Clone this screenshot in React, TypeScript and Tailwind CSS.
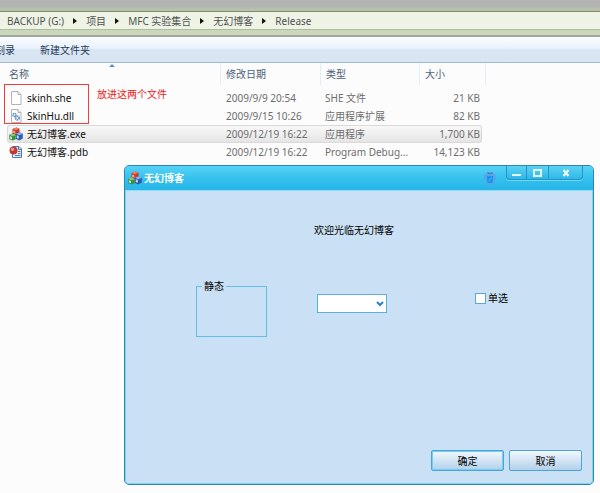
import { useState } from "react";

type FileKind = "blank" | "dll" | "exe" | "pdb";

interface FileRow {
  name: string;
  kind: FileKind;
  date: string;
  type: string;
  size: string;
}

const crumbs = ["BACKUP (G:)", "项目", "MFC 实验集合", "无幻博客", "Release"];

const files: FileRow[] = [
  { name: "skinh.she", kind: "blank", date: "2009/9/9 20:54", type: "SHE 文件", size: "21 KB" },
  { name: "SkinHu.dll", kind: "dll", date: "2009/9/15 10:26", type: "应用程序扩展", size: "82 KB" },
  { name: "无幻博客.exe", kind: "exe", date: "2009/12/19 16:22", type: "应用程序", size: "1,700 KB" },
  { name: "无幻博客.pdb", kind: "pdb", date: "2009/12/19 16:22", type: "Program Debug...", size: "14,123 KB" },
];

// three coloured cubes, the default MFC icon
function MfcIcon() {
  return (
    <svg width="14" height="14" viewBox="0 0 14 14" className="shrink-0" aria-hidden="true">
      <path d="M3.500 2 7.500 0.500 10.500 1.800v5L7 8.200 3.500 6.800z" fill="#c43a22" />
      <path d="M3.500 2 7.500 0.500 10.500 1.800 7 3.200z" fill="#ea8069" />
      <path d="M4.300 3.400 6.300 4.200v2.600L4.300 6z" fill="#f3b9a9" />
      <path d="M0.300 7.800 3.300 6.500 6.800 7.900v4.300L3.800 13.600 0.300 12.200z" fill="#3c9140" />
      <path d="M0.300 7.800 3.300 6.500 6.800 7.900 3.800 9.200z" fill="#8ecb80" />
      <path d="M1 9.200 3 10v2.300l-2-.8z" fill="#cdebc3" />
      <path d="M7 6.700 10.600 5.300 13.800 6.700v4.900L10.300 13.400 7 12z" fill="#2c5cb4" />
      <path d="M7 6.700 10.600 5.300 13.800 6.700 10.300 8.200z" fill="#8fb5ea" />
      <path d="M7.800 8.300 9.700 9.100v2.700L7.800 11z" fill="#cfe0f8" />
    </svg>
  );
}

function FileIcon({ kind }: { kind: FileKind }) {
  if (kind === "exe") return <MfcIcon />;

  if (kind === "pdb") {
    return (
      <svg width="14" height="14" viewBox="0 0 14 14" className="shrink-0" aria-hidden="true">
        <path d="M3.500 1.500h6.500l2.500 2.500v8.500h-9z" fill="#e4edfa" stroke="#5577ad" />
        <path d="M9.500 1.500v3h3" fill="none" stroke="#5577ad" />
        <path d="M9 6.500h2.500M9 8.500h2.500M6 10.500h5.500" stroke="#4a76c0" />
        <circle cx="4.500" cy="5.500" r="4" fill="#c03a35" />
        <circle cx="3.500" cy="4.300" r="1.800" fill="#e79088" />
      </svg>
    );
  }

  return (
    <svg width="14" height="14" viewBox="0 0 14 14" className="shrink-0" aria-hidden="true">
      <path d="M2.500 0.500h6.500l3 3v10h-9.500z" fill="#fdfdfd" stroke="#b2b2b2" />
      <path d="M9 0.500v3h3" fill="#ececec" stroke="#b2b2b2" />
      {kind === "dll" && (
        <g fill="none" stroke="#5c8fbd">
          <circle cx="5.500" cy="6" r="1.500" strokeWidth="1.500" strokeDasharray="1.200 .4" />
          <circle cx="8.300" cy="9" r="1.800" strokeWidth="1.700" strokeDasharray="1.300 .5" />
        </g>
      )}
    </svg>
  );
}

function AddressBar() {
  return (
    <nav className="border-y border-t-[#7f8a70] border-b-[#aebd9f] bg-[#eef3e6]">
      <ol className="flex h-[17px] items-center pl-[7px] text-[#4c5450]">
        {crumbs.map((crumb, i) => (
          <li key={crumb} className="flex items-center">
            {i > 0 && (
              <svg width="4" height="6" viewBox="0 0 4 6" className="mx-[9px]" aria-hidden="true">
                <path d="M0 0 4 3 0 6z" fill="#111" />
              </svg>
            )}
            <a href="#">{crumb}</a>
          </li>
        ))}
      </ol>
    </nav>
  );
}

function FileList() {
  const th = "h-[18px] border-l border-[#e3edf7] pl-[5px] text-left font-normal";

  return (
    <div className="relative ml-[7px]">
      <svg width="6" height="3" viewBox="0 0 6 3" className="absolute left-[102px] top-px" aria-hidden="true">
        <path d="M0 3 3 0 6 3z" fill="#5c93b5" />
      </svg>
      <table className="w-[479px] table-fixed border-separate border-spacing-0 whitespace-nowrap">
        <colgroup>
          <col className="w-[213px]" />
          <col className="w-[100px]" />
          <col className="w-[99px]" />
          <col className="w-[63px]" />
          <col className="w-1" />
        </colgroup>
        <thead className="text-[#4c607a]">
          <tr>
            <th className="h-[22px] pl-[2px] text-left font-normal">名称</th>
            <th className={th}>修改日期</th>
            <th className={th}>类型</th>
            <th colSpan={2} className={`${th} border-r`}>大小</th>
          </tr>
          <tr>
            <td colSpan={5} className="h-1" />
          </tr>
        </thead>
        <tbody className="text-[#6d6d6d]">
          {files.map((file) => {
            const on = file.kind === "exe";
            const cell = on
              ? "h-[18px] border-y border-[#d9d9d9] bg-linear-to-b from-[#f8f8f8] to-[#e5e5e5] p-0"
              : "h-[18px] p-0";
            return (
              <tr key={file.name}>
                <td className={`${cell} ${on ? "rounded-l-[3px] border-l" : ""}`}>
                  <div className={`flex items-center gap-1 text-[#111] ${on ? "pl-px" : "pl-0.5"}`}>
                    <FileIcon kind={file.kind} />
                    {file.name}
                  </div>
                </td>
                <td className={cell}>
                  <div className="pl-[6px]">{file.date}</div>
                </td>
                <td className={cell}>
                  <div className="pl-[5px]">{file.type}</div>
                </td>
                <td className={`${cell} text-right ${on ? "rounded-r-[3px] border-r" : ""}`}>
                  <div className={on ? "pr-px" : "pr-0.5"}>{file.size}</div>
                </td>
                <td />
              </tr>
            );
          })}
        </tbody>
      </table>

      {/* note around the two skin files */}
      <div className="pointer-events-none absolute -left-[3px] top-[21px] h-[40px] w-[85px] border border-[#f03c3c]" />
      <p className="absolute left-[90px] top-[24px] text-[#f01818]">放进这两个文件</p>
    </div>
  );
}

function TitleBar() {
  return (
    <header className="flex h-[25px] shrink-0 items-start rounded-t-[4px] border-b border-[#8fdcf5] bg-linear-to-b from-[#55d3f7] via-[#35c1ee] to-[#25b5e8] pl-[3px] pr-[10px] text-white">
      <div className="flex h-6 flex-1 items-center gap-0.5 font-bold">
        <MfcIcon />
        <h1>无幻博客</h1>
      </div>
      <button type="button" aria-label="换肤" className="mr-[9px] mt-[5px]">
        <svg width="14" height="14" viewBox="0 0 14 14">
          <path
            d="M5 1.500h4l3.500 3v4h-1.500l-.8 4.500h-6.400L3 8.500H1.500v-4z"
            fill="#4fa9ea"
            stroke="#65a0dc"
            strokeLinejoin="round"
          />
          <path d="M4 5h6v3l-.6 4H4.600L4 8z" fill="#1792f0" />
          <path d="M5 1v1.500h4V1" fill="none" stroke="#4a78b8" />
          <path d="M5.500 10.500 8.500 6.500" stroke="#4fb6fa" />
        </svg>
      </button>
      <div className="flex h-[14px] rounded-b-[4px] border border-t-0 border-[#2394c4] bg-linear-to-b from-[#5bd2f4] to-[#2cb7e8] shadow-[0_1px_0_#6fd8f8]">
        <button type="button" aria-label="最小化" className="flex w-5 items-center justify-center border-r border-[#2394c4]">
          <svg width="9" height="8" viewBox="0 0 9 8">
            <path d="M0 5h9v2H0z" fill="#dff5fc" />
          </svg>
        </button>
        <button type="button" aria-label="最大化" className="flex w-[22px] items-center justify-center border-r border-[#2394c4]">
          <svg width="9" height="8" viewBox="0 0 9 8">
            <path d="M1 1h7v6H1z" fill="none" stroke="#dff5fc" strokeWidth="2" />
          </svg>
        </button>
        <button type="button" aria-label="关闭" className="flex w-[33px] items-center justify-center">
          <svg width="8" height="8" viewBox="0 0 8 8">
            <path d="M1.500 1 6.500 7M6.500 1 1.500 7" stroke="#f2fcff" strokeWidth="2" />
          </svg>
        </button>
      </div>
    </header>
  );
}

function Dialog() {
  const [checked, setChecked] = useState(false);
  const button =
    "h-[21px] w-[73px] rounded-[2px] border border-[#4fa3d6] bg-linear-to-b from-[#f2f8fd] to-[#b3d0ea]";

  return (
    <section className="mx-[6px] mb-2 ml-[124px] mt-[4px] flex flex-1 flex-col rounded-[5px] border border-[#2f86b4] bg-[#cae0f4] text-black">
      <TitleBar />
      <form
        className="flex flex-1 flex-col rounded-b-[4px] border border-t-0 border-[#7fd3ee]"
        onSubmit={(e) => e.preventDefault()}
      >
        <p className="mt-8 pr-[10px] text-center">欢迎光临无幻博客</p>
        <div className="mt-[42px] flex items-start pl-[70px]">
          <fieldset className="h-[58px] w-[71px] border border-[#62bce4] pl-[5px]">
            <legend className="px-0.5">静态</legend>
          </fieldset>
          <div className="relative ml-[50px] mt-[15px]">
            <select
              aria-label="选项"
              defaultValue=""
              className="block h-[19px] w-[70px] appearance-none border border-[#62aedb] bg-white"
            >
              <option value="" />
            </select>
            <svg width="8" height="6" viewBox="0 0 8 6" className="pointer-events-none absolute right-[3px] top-[7px]" aria-hidden="true">
              <path d="M1 1 4 4 7 1" fill="none" stroke="#2b80cf" strokeWidth="2" />
            </svg>
          </div>
          <label className="ml-[88px] mt-3 flex items-center gap-0.5">
            <input
              type="checkbox"
              checked={checked}
              onChange={(e) => setChecked(e.target.checked)}
              className="size-[11px] appearance-none border border-solid border-[#5ba9da] bg-white checked:bg-[#2b80cf]"
            />
            单选
          </label>
        </div>
        <div className="mb-3 mr-[10px] mt-auto flex justify-end gap-[5px]">
          <button type="submit" className={`${button} ring-1 ring-inset ring-[#6fd0f7]`}>
            确定
          </button>
          <button type="button" className={button}>
            取消
          </button>
        </div>
      </form>
    </section>
  );
}

export default function App() {
  return (
    <div className="flex min-h-screen flex-col overflow-hidden bg-[#fcfcfc] font-['Noto_Sans','Noto_Sans_CJK_SC',sans-serif] text-[10px] leading-[14px]">
      <div className="h-[11px] bg-linear-to-b from-[#b3b3b3] from-50% to-[#b7c6a4]" />
      <AddressBar />
      <div className="h-[7px] border-b-2 border-[#a2a69d] bg-[#cbd7bb]" />
      <div className="flex h-[26px] items-center gap-[25px] border-b border-[#a3b9d8] bg-linear-to-b from-[#fafdff] from-0% via-[#e9f1fb] via-45% to-[#dae5f4] to-50% text-[#1e395b]">
        <button type="button" className="-ml-[5px]">刻录</button>
        <button type="button">新建文件夹</button>
      </div>
      <FileList />
      <Dialog />
    </div>
  );
}
